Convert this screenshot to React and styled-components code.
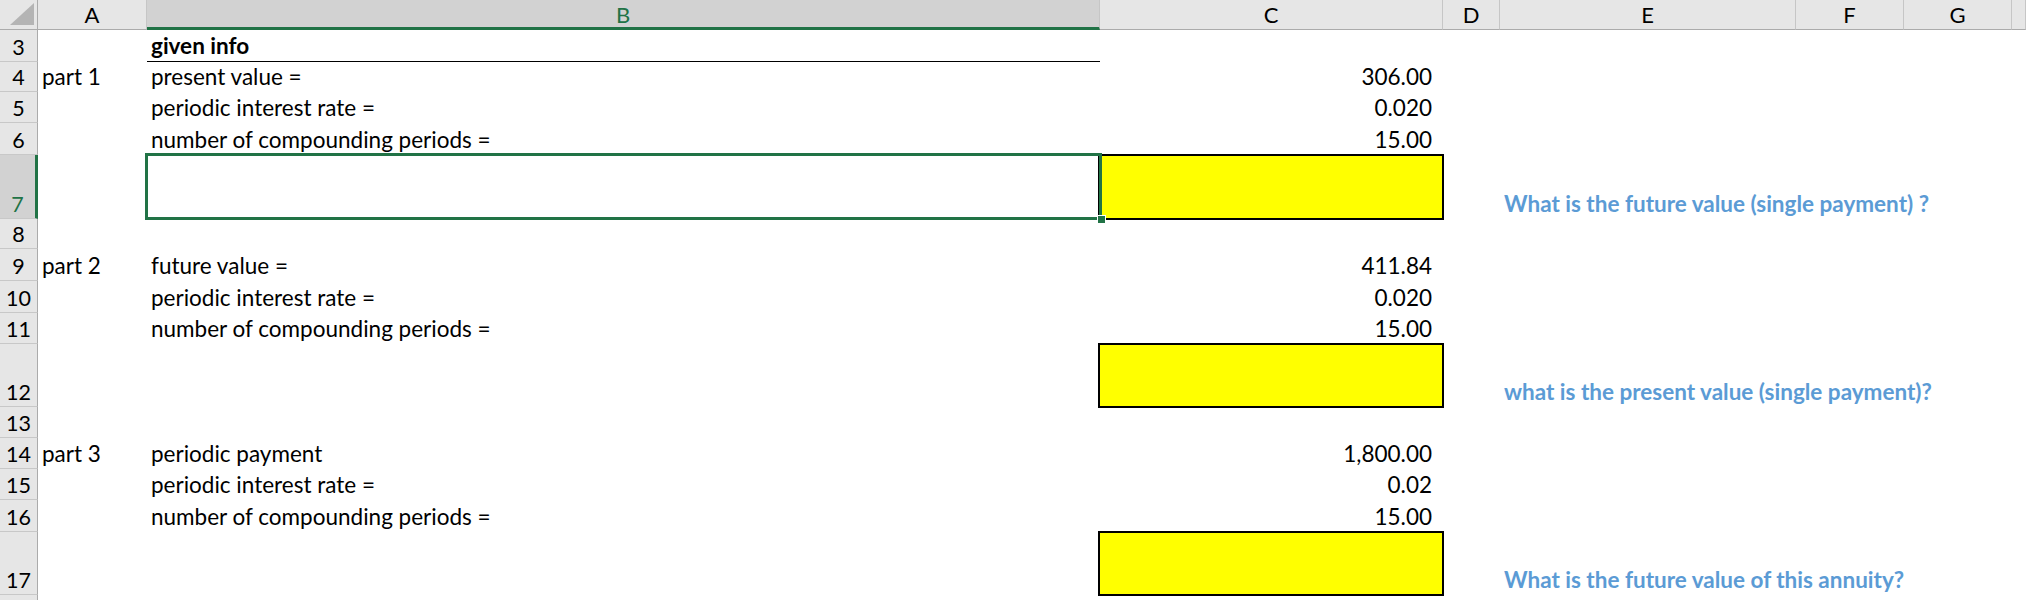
import React from "react";
import styled, { createGlobalStyle } from "styled-components";

const FONT = `Lato, "Open Sans", "Liberation Sans", sans-serif`;
const COLS = [38, 109, 953, 343, 57, 296, 108, 108];
const GRID = `${COLS.map((c) => c + "px").join(" ")} 1fr`;
const GREEN = "#217346";

const GlobalStyle = createGlobalStyle`
  html, body { margin: 0; padding: 0; background: #fff; }
  body { font-family: ${FONT}; overflow: hidden; }
`;

const Sheet = styled.div`
  width: 2026px;
  height: 600px;
  overflow: hidden;
  display: flex;
  flex-direction: column;
  font-family: ${FONT};
  font-size: 22.5px;
  color: #000;
`;

const HeaderRow = styled.div`
  display: grid;
  grid-template-columns: ${GRID};
  height: 30px;
  flex: none;
`;

const Corner = styled.div`
  background: #e6e6e6;
  border-right: 1px solid #ababab;
  border-bottom: 1px solid #ababab;
  box-sizing: border-box;
  display: flex;
  align-items: flex-end;
  justify-content: flex-end;
  padding: 0 3px 4px 0;
`;

const ColHead = styled.div`
  background: ${(p) => (p.$active ? "#d2d2d2" : "#e6e6e6")};
  color: ${(p) => (p.$active ? GREEN : "#000")};
  border-right: 1px solid #c6c6c6;
  border-bottom: ${(p) => (p.$active ? `3px solid ${GREEN}` : "1px solid #ababab")};
  box-sizing: border-box;
  display: flex;
  align-items: center;
  justify-content: center;
  font-size: 22px;
  line-height: 1;
  padding-top: ${(p) => (p.$active ? "2px" : "0")};
`;

const Row = styled.div`
  display: grid;
  grid-template-columns: ${GRID};
  height: ${(p) => p.$h}px;
  flex: none;
`;

const RowNum = styled.div`
  background: ${(p) => (p.$active ? "#d2d2d2" : "#e6e6e6")};
  color: ${(p) => (p.$active ? GREEN : "#000")};
  border-right: ${(p) => (p.$active ? `3px solid ${GREEN}` : "1px solid #ababab")};
  border-bottom: 1px solid #c8c8c8;
  box-sizing: border-box;
  display: flex;
  align-items: flex-end;
  justify-content: center;
  font-size: 21.5px;
  line-height: 26px;
  padding-bottom: 1px;
`;

const Cell = styled.div`
  position: relative;
  display: flex;
  align-items: flex-end;
  justify-content: ${(p) => (p.$num ? "flex-end" : "flex-start")};
  padding: 0 ${(p) => (p.$num ? "11px" : "4px")} 2px 4px;
  box-sizing: border-box;
  white-space: nowrap;
  min-width: 0;
  line-height: 26px;
  font-weight: ${(p) => (p.$bold ? 700 : 400)};
  color: ${(p) => (p.$blue ? "#5b9bd5" : "#000")};
  background: ${(p) => (p.$fill ? "#ffff00" : "transparent")};
  border-bottom: ${(p) => (p.$underline ? "1px solid #000" : "none")};

  ${(p) =>
    p.$fill &&
    `
    &::after {
      content: "";
      position: absolute;
      inset: -1px -1px -1px -2px;
      border: 2px solid #000;
      z-index: 1;
      pointer-events: none;
    }
  `}

  ${(p) =>
    p.$selected &&
    `
    &::after {
      content: "";
      position: absolute;
      inset: -2px -2px -1px -2px;
      border: 3px solid ${GREEN};
      z-index: 2;
    }
    &::before {
      content: "";
      position: absolute;
      right: -6px;
      bottom: -5px;
      width: 7px;
      height: 7px;
      background: ${GREEN};
      border: 1px solid #fff;
      z-index: 3;
    }
  `}
`;

const CornerMark = () => (
  <svg width="24" height="22" viewBox="0 0 24 22">
    <polygon points="24,0 24,22 0,22" fill="#b4b4b4" />
  </svg>
);

const LETTERS = ["A", "B", "C", "D", "E", "F", "G", ""];
const KEYS = ["A", "B", "C", "D", "E", "F", "G", "H"];

const ROWS = [
  { n: 3, h: 32, B: { text: "given info", bold: true, underline: true } },
  { n: 4, h: 30, A: "part 1", B: "present value =", C: { text: "306.00", num: true } },
  { n: 5, h: 31, B: "periodic interest rate =", C: { text: "0.020", num: true } },
  { n: 6, h: 32, B: "number of compounding periods =", C: { text: "15.00", num: true } },
  {
    n: 7,
    h: 64,
    active: true,
    B: { selected: true },
    C: { fill: true },
    E: { text: "What is the future value (single payment) ?", bold: true, blue: true },
  },
  { n: 8, h: 30 },
  { n: 9, h: 32, A: "part 2", B: "future value =", C: { text: "411.84", num: true } },
  { n: 10, h: 32, B: "periodic interest rate =", C: { text: "0.020", num: true } },
  { n: 11, h: 31, B: "number of compounding periods =", C: { text: "15.00", num: true } },
  {
    n: 12,
    h: 63,
    C: { fill: true },
    E: { text: "what is the present value (single payment)?", bold: true, blue: true },
  },
  { n: 13, h: 31 },
  { n: 14, h: 31, A: "part 3", B: "periodic payment", C: { text: "1,800.00", num: true } },
  { n: 15, h: 31, B: "periodic interest rate =", C: { text: "0.02", num: true } },
  { n: 16, h: 32, B: "number of compounding periods =", C: { text: "15.00", num: true } },
  {
    n: 17,
    h: 63,
    C: { fill: true },
    E: { text: "What is the future value of this annuity?", bold: true, blue: true },
  },
  { n: 18, h: 31 },
];

const norm = (v) => (typeof v === "string" ? { text: v } : v || {});

export default function App() {
  return (
    <>
      <GlobalStyle />
      <Sheet>
        <HeaderRow>
          <Corner>
            <CornerMark />
          </Corner>
          {LETTERS.map((l, i) => (
            <ColHead key={i} $active={l === "B"}>
              {l}
            </ColHead>
          ))}
        </HeaderRow>
        {ROWS.map((r) => (
          <Row key={r.n} $h={r.h}>
            <RowNum $active={r.active}>{r.n}</RowNum>
            {KEYS.map((k) => {
              const c = norm(r[k]);
              return (
                <Cell
                  key={k}
                  $num={c.num}
                  $bold={c.bold}
                  $blue={c.blue}
                  $fill={c.fill}
                  $underline={c.underline}
                  $selected={c.selected}
                >
                  {c.text}
                </Cell>
              );
            })}
          </Row>
        ))}
      </Sheet>
    </>
  );
}
